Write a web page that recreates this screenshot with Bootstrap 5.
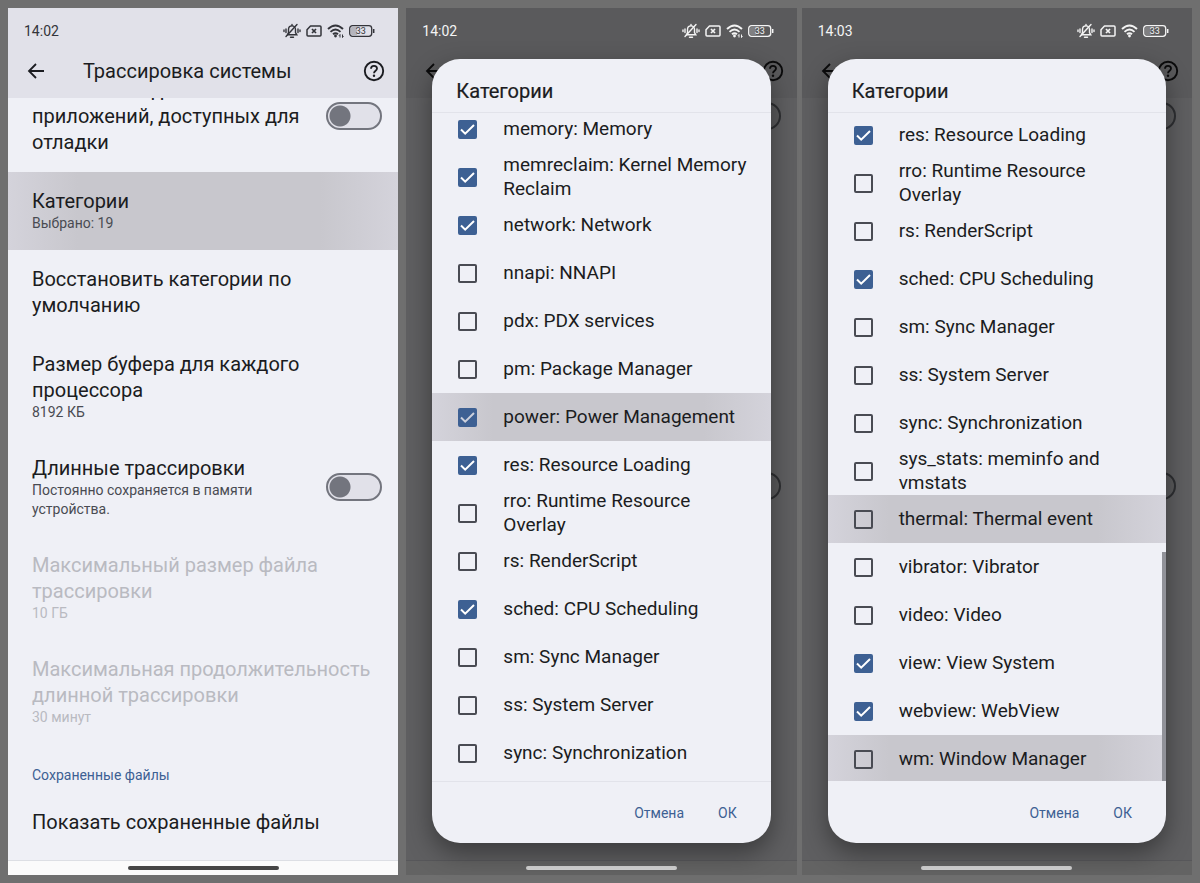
<!DOCTYPE html>
<html lang="ru">
<head>
<meta charset="utf-8">
<meta name="viewport" content="width=device-width, initial-scale=1">
<title>Трассировка системы</title>
<link href="https://cdn.jsdelivr.net/npm/bootstrap@5.3.0/dist/css/bootstrap.min.css" rel="stylesheet">
<style>
:root { --ink: #1b1c21; --soft: #494b52; --accent: #3d6093; --surface: #eff0f6; --bar: #e1e1e9; --press: linear-gradient(90deg, #d4d3db, #c8c7cd 18%, #c8c7cd 80%, #d4d3db); }
body { background: #6f6f6f; color: var(--ink); font-family: Roboto, "Liberation Sans", sans-serif; font-size: 20px; line-height: 26px; }
.board { height: 100vh; padding: 8px; }
.phone { flex: 1 1 0; min-width: 0; background: var(--surface); }
.phone-first { margin-right: 8px; }
.phone-second { margin-right: 5px; }
.top-area { background: var(--bar); height: 90px; }
.status { padding: 14px 23px 14px 16px; height: 46px; font-size: 14px; line-height: 18px; color: #33343a; }
.status-icons { gap: 5px; }
.appbar { padding: 0 13px 0 17px; height: 34px; }
.appbar h1 { font-size: 20px; line-height: 26px; font-weight: 400; margin: 0; flex: 1; padding-left: 36px; }
.icon-btn { border: 0; background: none; padding: 0; color: inherit; display: flex; }
.scroller { overflow: hidden; min-height: 0; }
.settings { margin-top: -37px; }
.setting { padding: 16px 16px 17px 24px; }
.setting p { margin: 0; }
.setting .note { font-size: 14px; line-height: 19px; color: var(--soft); }
.setting.is-off, .setting.is-off .note { color: #b9bac1; }
.setting.is-pressed { background: var(--press); }
.section-name { font-size: 14px; line-height: 18px; color: var(--accent); font-weight: 400; margin: 0; padding: 22px 24px 9px; }
.toggle { appearance: none; flex: none; width: 56px; height: 28px; margin: 0; border: 2px solid #73757e; border-radius: 14px; background: radial-gradient(circle at 12px 12px, #73757e 10px, transparent 11px) #e1e1e9; }
.navbar-strip { height: 15px; background: #fbfbfb; border-top: 1px solid #dddfe4; }
.pill { width: 151px; height: 4px; border-radius: 2px; background: #454545; }
/* screens behind an open dialog */
.is-dim { background: #5f5f61; }
.is-dim .top-area { background: #5a5a5c; color: #0b0b0c; }
.is-dim .status { color: #f4f4f4; }
.is-dim .toggle { border-color: #2e2f32; background: #5a5a5c; }
.is-dim .navbar-strip { background: #636363; border-color: #57575a; }
.is-dim .pill { background: #d2d2d2; }
.ghost-row { position: absolute; right: 16px; }
.ghost-first { top: 94px; }
.ghost-second { top: 464px; }
.pick-dialog { position: absolute; inset: 51px 26px 32px 26px; background: var(--surface); border-radius: 28px; overflow: hidden; box-shadow: 0 10px 26px rgba(0,0,0,.4); }
.pick-dialog h2 { font-size: 20px; line-height: 26px; font-weight: 400; margin: 0; padding: 19px 24px 8px; border-bottom: 1px solid #e2e3ea; -webkit-text-stroke: .2px; }
.pick-list { flex: 1 1 0; min-height: 0; overflow: hidden; position: relative; }
.pick-list ul { margin: 0; }
.list-second ul { margin-top: -8px; }
.list-third ul { margin-top: -2px; }
.pick-list label { height: 48px; padding: 0 16px 0 26px; gap: 26px; font-size: 19px; line-height: 24px; }
.pick-list li.is-pressed { background: var(--press); }
.tick { appearance: none; flex: none; width: 19px; height: 19px; margin: 0; border: 2px solid #494b53; border-radius: 2px; }
.tick:checked { border-color: var(--accent); background: var(--accent) url("data:image/svg+xml,%3Csvg xmlns='http://www.w3.org/2000/svg' viewBox='0 0 15 15'%3E%3Cpath fill='none' stroke='%23fff' stroke-width='2' d='M1 7.5l4.200 4.200L14 3'/%3E%3C/svg%3E") center/15px no-repeat; }
.is-pressed .tick:checked { background-image: url("data:image/svg+xml,%3Csvg xmlns='http://www.w3.org/2000/svg' viewBox='0 0 15 15'%3E%3Cpath fill='none' stroke='%23ccd0dc' stroke-width='2' d='M1 7.500l4.200 4.200L14 3'/%3E%3C/svg%3E"); }
.thumb { position: absolute; right: 0; bottom: 0; width: 4px; height: 229px; background: #919299; }
.actions { height: 62px; padding: 0 34px; gap: 34px; border-top: 1px solid #e2e3ea; }
.list-third + .actions { border-top-color: transparent; }
.actions button { border: 0; background: none; padding: 0; color: var(--accent); font-size: 14px; line-height: 18px; }
</style>
</head>
<body>
<svg width="0" height="0" class="position-absolute" aria-hidden="true">
  <symbol id="i-mute" viewBox="0 0 18 16"><g fill="none" stroke="currentColor" stroke-width="1.400" stroke-linecap="round"><path d="M4.500 11.800h9.300l-1.300-2.200V6.500c0-2.200-1.500-3.600-3.500-3.600S5.500 4.300 5.500 6.500v3.100z"/><path d="M9 1.500v1M7.500 14.200h3M3 13.500 14 1.500"/><path d="M3 6v3.500M1 7v1.500M15 6v3.500M17 7v1.500"/></g></symbol>
  <symbol id="i-sim" viewBox="0 0 16 12"><path d="M4.500 1H14q1 0 1 1v8q0 1-1 1H2q-1 0-1-1V4.800z" fill="none" stroke="currentColor" stroke-width="1.500" stroke-linejoin="round"/><path d="M6 4l4 4m0-4L6 8" stroke="currentColor" stroke-width="1.700"/></symbol>
  <symbol id="i-wifi" viewBox="0 0 17 14"><g fill="none" stroke="currentColor" stroke-width="1.900"><path d="M1 5Q8.500-2.200 16 5M3.500 7.900q5-4.700 10 0M6 10.300q2.500-2.200 5 0"/></g><circle cx="8.500" cy="12" r="1.400" fill="currentColor"/></symbol>
  <symbol id="i-data" viewBox="0 0 17 14"><path d="M13 13.500v-3M15.500 10.500v3M12 11.700l1-1.200M16.500 12.300l-1 1.200" fill="none" stroke="currentColor" stroke-width="1"/></symbol>
  <symbol id="i-batt" viewBox="0 0 26 12"><rect x=".7" y=".7" width="22" height="10.600" rx="2.800" fill="none" stroke="currentColor" stroke-width="1.300"/><path d="M2 3q0-1 1-1h5v8H3q-1 0-1-1z" fill="currentColor" opacity=".25"/><path d="M24.700 4v4" stroke="currentColor" stroke-width="1.500"/><text x="11.700" y="9.300" font-size="9" text-anchor="middle" fill="currentColor">33</text></symbol>
  <symbol id="i-back" viewBox="0 0 20 20"><path d="M18 10H3M10 3l-7 7 7 7" fill="none" stroke="currentColor" stroke-width="1.800"/></symbol>
  <symbol id="i-help" viewBox="0 0 22 22"><circle cx="11" cy="11" r="9.200" fill="none" stroke="currentColor" stroke-width="1.900"/><path d="M8 8.800q0-2.900 3-2.900t3 2.700c0 2-3 2.300-3 4.600" fill="none" stroke="currentColor" stroke-width="1.800"/><circle cx="11" cy="15.800" r="1.200" fill="currentColor"/></symbol>
</svg>

<main class="board d-flex">
  <section class="phone phone-first d-flex flex-column">
    <header class="top-area">
      <div class="status d-flex align-items-center justify-content-between">
        <span>14:02</span>
        <span class="status-icons d-flex align-items-center"><svg width="18" height="16"><use href="#i-mute"/></svg><svg width="16" height="12"><use href="#i-sim"/></svg><svg width="17" height="14"><use href="#i-wifi"/><use href="#i-data"/></svg><svg width="26" height="12"><use href="#i-batt"/></svg></span>
      </div>
      <div class="appbar d-flex align-items-center">
        <button class="icon-btn" type="button" aria-label="Назад"><svg width="22" height="20"><use href="#i-back"/></svg></button>
        <h1>Трассировка системы</h1>
        <button class="icon-btn" type="button" aria-label="Справка"><svg width="22" height="22"><use href="#i-help"/></svg></button>
      </div>
    </header>
    <div class="scroller flex-fill">
      <div class="settings">
        <div class="setting d-flex align-items-center justify-content-between">
          <label for="apps">Записывать данные<br>приложений, доступных для<br>отладки</label>
          <input class="toggle" type="checkbox" role="switch" id="apps">
        </div>
        <div class="setting is-pressed"><p>Категории</p><p class="note">Выбрано: 19</p></div>
        <div class="setting"><p>Восстановить категории по<br>умолчанию</p></div>
        <div class="setting"><p>Размер буфера для каждого<br>процессора</p><p class="note">8192 КБ</p></div>
        <div class="setting d-flex align-items-center justify-content-between">
          <label for="long">Длинные трассировки<span class="note d-block">Постоянно сохраняется в памяти<br>устройства.</span></label>
          <input class="toggle" type="checkbox" role="switch" id="long">
        </div>
        <div class="setting is-off"><p>Максимальный размер файла<br>трассировки</p><p class="note">10 ГБ</p></div>
        <div class="setting is-off"><p>Максимальная продолжительность<br>длинной трассировки</p><p class="note">30 минут</p></div>
        <h2 class="section-name">Сохраненные файлы</h2>
        <div class="setting"><p>Показать сохраненные файлы</p></div>
      </div>
    </div>
    <div class="navbar-strip d-flex align-items-center justify-content-center"><span class="pill"></span></div>
  </section>

  <section class="phone phone-second is-dim d-flex flex-column position-relative">
    <header class="top-area">
      <div class="status d-flex align-items-center justify-content-between">
        <span>14:02</span>
        <span class="status-icons d-flex align-items-center"><svg width="18" height="16"><use href="#i-mute"/></svg><svg width="16" height="12"><use href="#i-sim"/></svg><svg width="17" height="14"><use href="#i-wifi"/><use href="#i-data"/></svg><svg width="26" height="12"><use href="#i-batt"/></svg></span>
      </div>
      <div class="appbar d-flex align-items-center justify-content-between">
        <button class="icon-btn" type="button" aria-label="Назад"><svg width="22" height="20"><use href="#i-back"/></svg></button>
        <button class="icon-btn" type="button" aria-label="Справка"><svg width="22" height="22"><use href="#i-help"/></svg></button>
      </div>
    </header>
    <input class="toggle ghost-row ghost-first" type="checkbox" aria-label="Записывать данные приложений" disabled>
    <input class="toggle ghost-row ghost-second" type="checkbox" aria-label="Длинные трассировки" disabled>
    <div class="navbar-strip d-flex align-items-center justify-content-center mt-auto"><span class="pill"></span></div>
    <div class="pick-dialog d-flex flex-column" role="dialog" aria-labelledby="t2">
      <h2 id="t2">Категории</h2>
      <div class="pick-list list-second">
        <ul class="list-unstyled">
          <li><label class="d-flex align-items-center"><input class="tick" type="checkbox" checked>memory: Memory</label></li>
          <li><label class="d-flex align-items-center"><input class="tick" type="checkbox" checked><span>memreclaim: Kernel Memory<br>Reclaim</span></label></li>
          <li><label class="d-flex align-items-center"><input class="tick" type="checkbox" checked>network: Network</label></li>
          <li><label class="d-flex align-items-center"><input class="tick" type="checkbox">nnapi: NNAPI</label></li>
          <li><label class="d-flex align-items-center"><input class="tick" type="checkbox">pdx: PDX services</label></li>
          <li><label class="d-flex align-items-center"><input class="tick" type="checkbox">pm: Package Manager</label></li>
          <li class="is-pressed"><label class="d-flex align-items-center"><input class="tick" type="checkbox" checked>power: Power Management</label></li>
          <li><label class="d-flex align-items-center"><input class="tick" type="checkbox" checked>res: Resource Loading</label></li>
          <li><label class="d-flex align-items-center"><input class="tick" type="checkbox"><span>rro: Runtime Resource<br>Overlay</span></label></li>
          <li><label class="d-flex align-items-center"><input class="tick" type="checkbox">rs: RenderScript</label></li>
          <li><label class="d-flex align-items-center"><input class="tick" type="checkbox" checked>sched: CPU Scheduling</label></li>
          <li><label class="d-flex align-items-center"><input class="tick" type="checkbox">sm: Sync Manager</label></li>
          <li><label class="d-flex align-items-center"><input class="tick" type="checkbox">ss: System Server</label></li>
          <li><label class="d-flex align-items-center"><input class="tick" type="checkbox">sync: Synchronization</label></li>
          <li><label class="d-flex align-items-center"><input class="tick" type="checkbox"><span>sys_stats: meminfo and<br>vmstats</span></label></li>
        </ul>
      </div>
      <div class="actions d-flex align-items-center justify-content-end"><button type="button">Отмена</button><button type="button">ОК</button></div>
    </div>
  </section>

  <section class="phone is-dim d-flex flex-column position-relative">
    <header class="top-area">
      <div class="status d-flex align-items-center justify-content-between">
        <span>14:03</span>
        <span class="status-icons d-flex align-items-center"><svg width="18" height="16"><use href="#i-mute"/></svg><svg width="16" height="12"><use href="#i-sim"/></svg><svg width="17" height="14"><use href="#i-wifi"/></svg><svg width="26" height="12"><use href="#i-batt"/></svg></span>
      </div>
      <div class="appbar d-flex align-items-center justify-content-between">
        <button class="icon-btn" type="button" aria-label="Назад"><svg width="22" height="20"><use href="#i-back"/></svg></button>
        <button class="icon-btn" type="button" aria-label="Справка"><svg width="22" height="22"><use href="#i-help"/></svg></button>
      </div>
    </header>
    <input class="toggle ghost-row ghost-first" type="checkbox" aria-label="Записывать данные приложений" disabled>
    <input class="toggle ghost-row ghost-second" type="checkbox" aria-label="Длинные трассировки" disabled>
    <div class="navbar-strip d-flex align-items-center justify-content-center mt-auto"><span class="pill"></span></div>
    <div class="pick-dialog d-flex flex-column" role="dialog" aria-labelledby="t3">
      <h2 id="t3">Категории</h2>
      <div class="pick-list list-third">
        <ul class="list-unstyled">
          <li><label class="d-flex align-items-center"><input class="tick" type="checkbox" checked>res: Resource Loading</label></li>
          <li><label class="d-flex align-items-center"><input class="tick" type="checkbox"><span>rro: Runtime Resource<br>Overlay</span></label></li>
          <li><label class="d-flex align-items-center"><input class="tick" type="checkbox">rs: RenderScript</label></li>
          <li><label class="d-flex align-items-center"><input class="tick" type="checkbox" checked>sched: CPU Scheduling</label></li>
          <li><label class="d-flex align-items-center"><input class="tick" type="checkbox">sm: Sync Manager</label></li>
          <li><label class="d-flex align-items-center"><input class="tick" type="checkbox">ss: System Server</label></li>
          <li><label class="d-flex align-items-center"><input class="tick" type="checkbox">sync: Synchronization</label></li>
          <li><label class="d-flex align-items-center"><input class="tick" type="checkbox"><span>sys_stats: meminfo and<br>vmstats</span></label></li>
          <li class="is-pressed"><label class="d-flex align-items-center"><input class="tick" type="checkbox">thermal: Thermal event</label></li>
          <li><label class="d-flex align-items-center"><input class="tick" type="checkbox">vibrator: Vibrator</label></li>
          <li><label class="d-flex align-items-center"><input class="tick" type="checkbox">video: Video</label></li>
          <li><label class="d-flex align-items-center"><input class="tick" type="checkbox" checked>view: View System</label></li>
          <li><label class="d-flex align-items-center"><input class="tick" type="checkbox" checked>webview: WebView</label></li>
          <li class="is-pressed"><label class="d-flex align-items-center"><input class="tick" type="checkbox">wm: Window Manager</label></li>
        </ul>
        <span class="thumb"></span>
      </div>
      <div class="actions d-flex align-items-center justify-content-end"><button type="button">Отмена</button><button type="button">ОК</button></div>
    </div>
  </section>
</main>
<script src="https://cdn.jsdelivr.net/npm/bootstrap@5.3.0/dist/js/bootstrap.bundle.min.js"></script>
</body>
</html>
